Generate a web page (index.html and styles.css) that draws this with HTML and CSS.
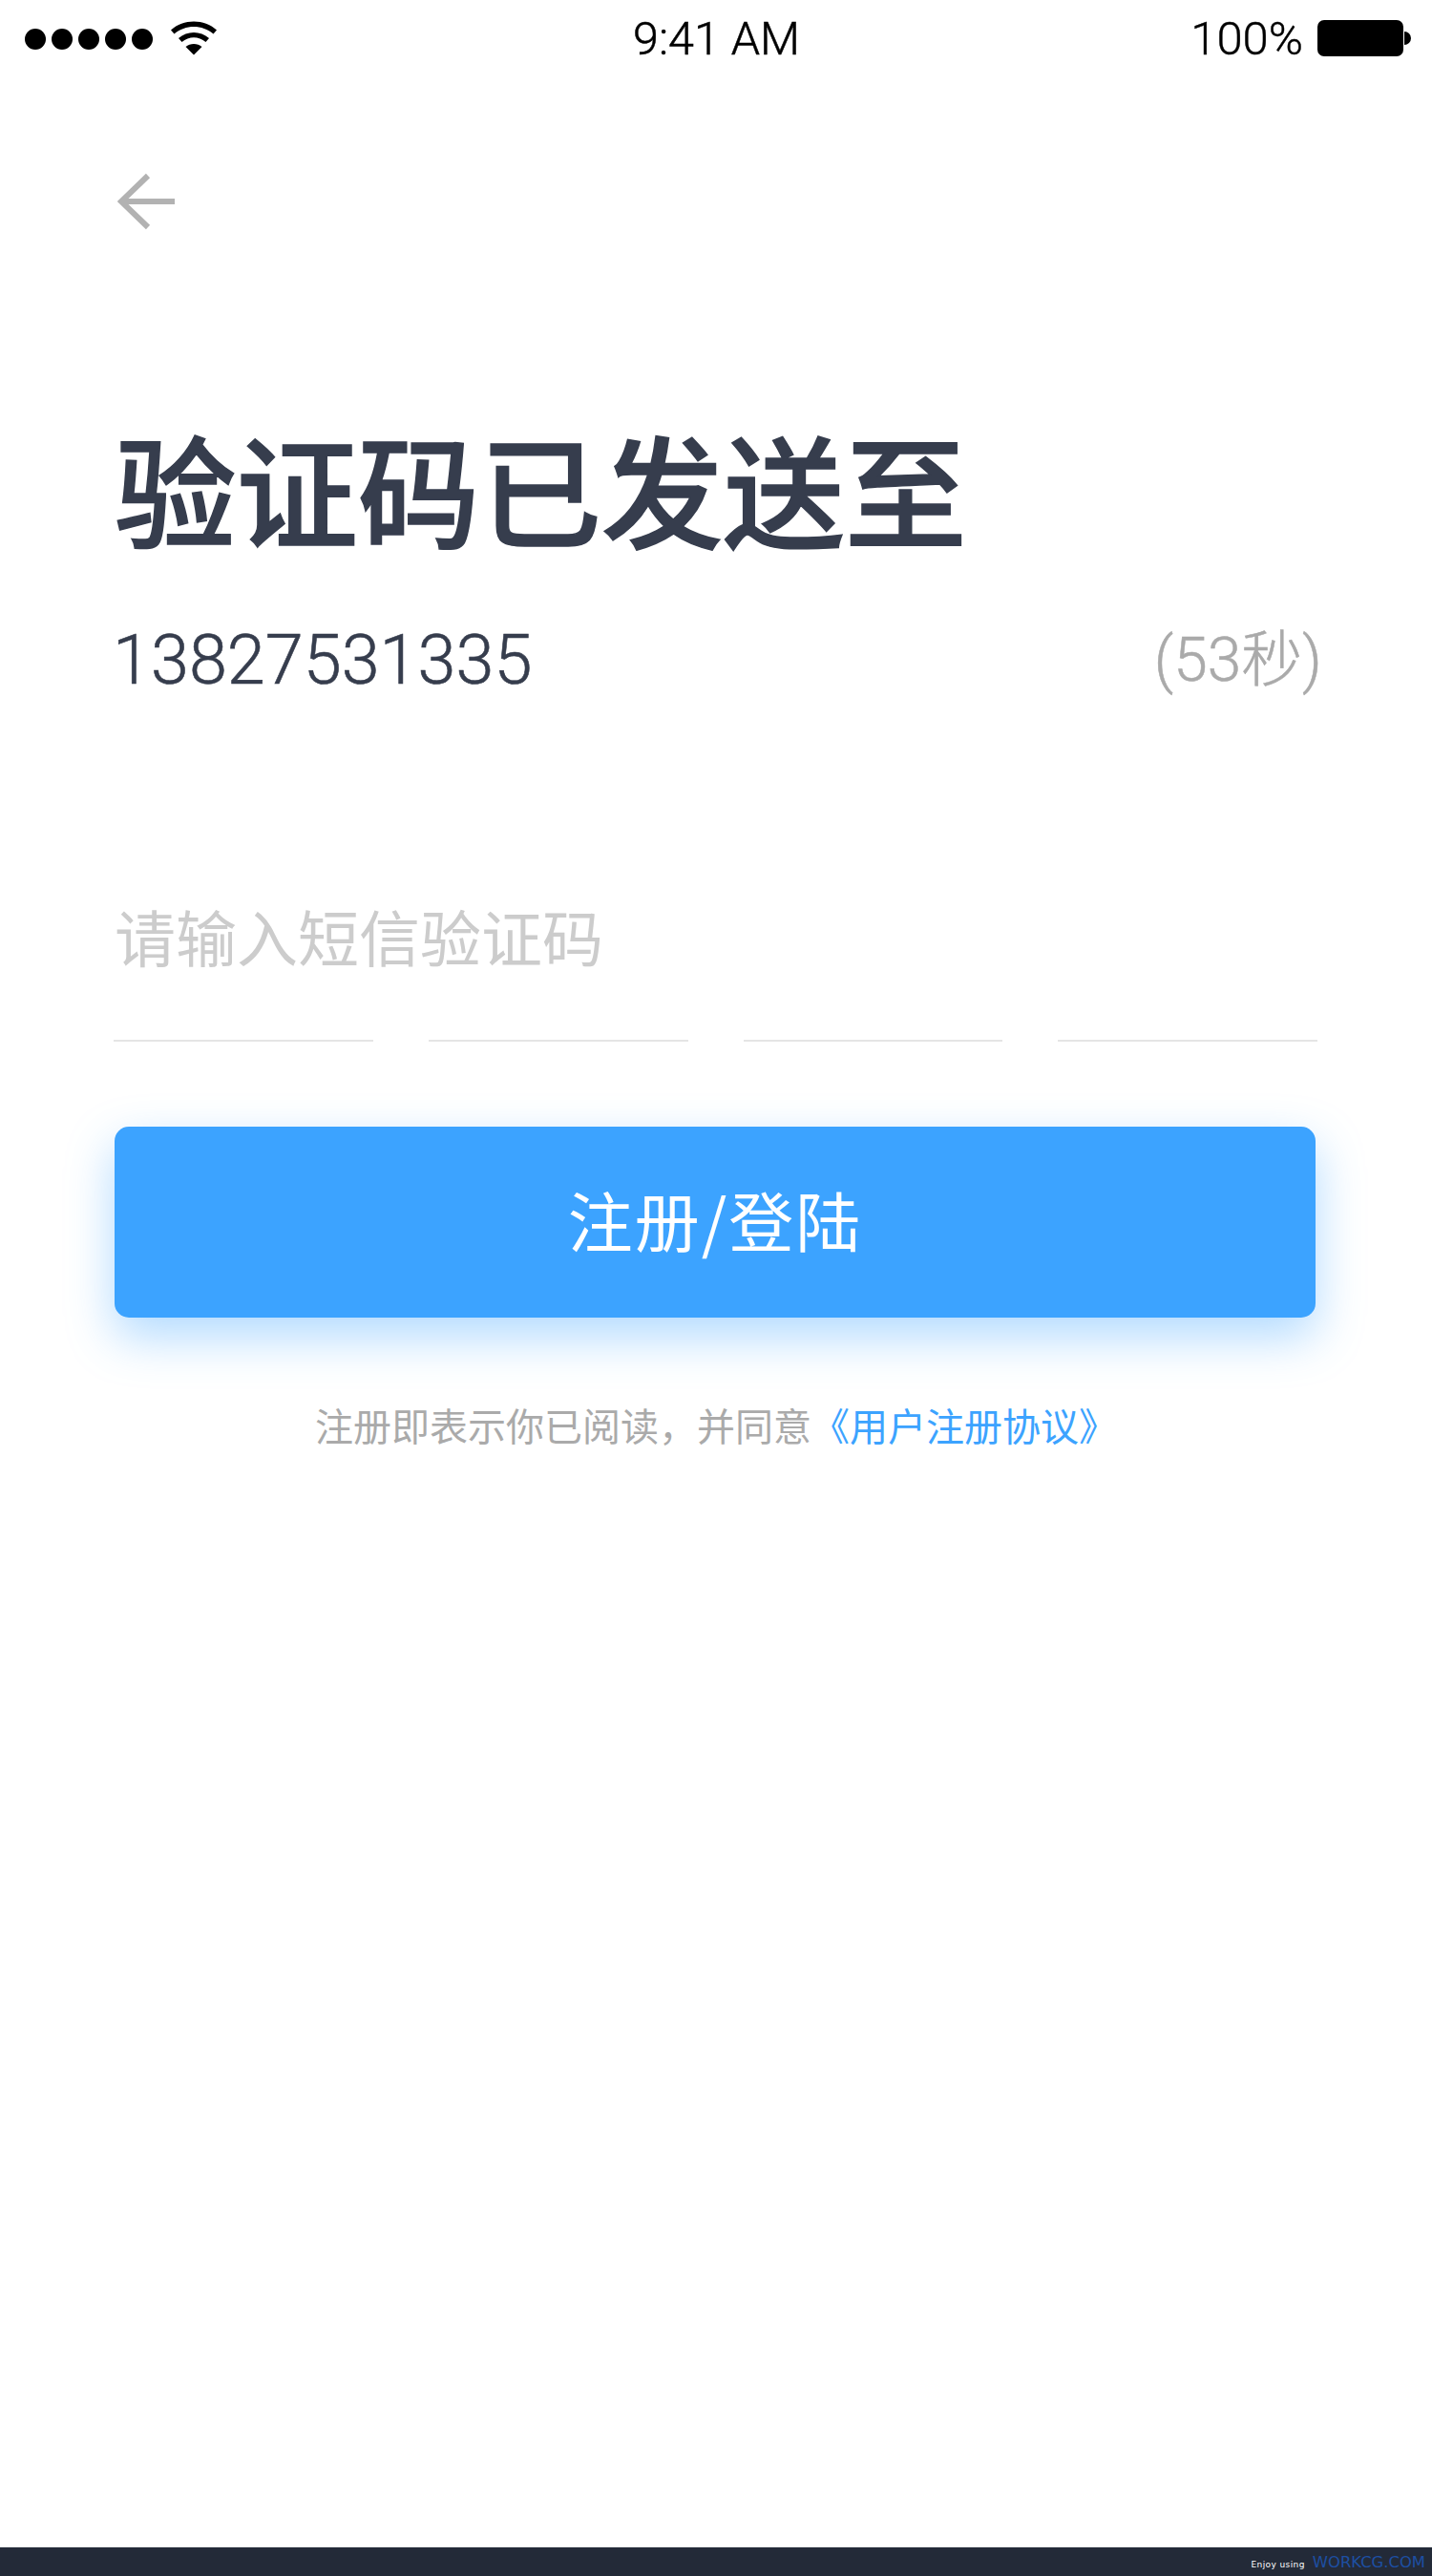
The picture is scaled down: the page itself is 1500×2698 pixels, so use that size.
FILE: index.html
```html
<!DOCTYPE html>
<html>
<head>
	<title>验证码</title>
	<link rel="stylesheet" href="styles.css">
</head>
<body>
	<div class="status">
		<div class="signal">
			<i class="dot"></i><i class="dot"></i><i class="dot"></i><i class="dot"></i><i class="dot"></i>
			<svg class="wifi" width="48" height="36" viewBox="0 0 48 36">
				<path d="M0 9.500C13 -2.500 35 -2.500 48 9.500L44.500 13.500C33 3.500 15 3.500 3.500 13.500Z"/>
				<path d="M8 18C17 10 31 10 40 18L36.500 22C29 15.500 19 15.500 11.500 22Z"/>
				<path d="M15.500 27C20 23 28 23 32.500 27L24 35.500Z"/>
			</svg>
		</div>
		<div class="time">9:41 AM</div>
		<div class="power">
			<span class="percent">100%</span>
			<div class="battery"></div>
			<div class="battery-tip"></div>
		</div>
	</div>

	<div class="back">
		<svg width="62" height="60" viewBox="0 0 62 60">
			<path d="M32 3L4 30L32 57M4 30H60" fill="none" stroke="#b2b2b2" stroke-width="6"/>
		</svg>
	</div>

	<div class="content">
		<h1 class="title">验证码已发送至</h1>
		<div class="phone-row">
			<span class="phone">13827531335</span>
			<span class="timer">(53秒)</span>
		</div>
		<div class="placeholder">请输入短信验证码</div>
		<div class="code-lines">
			<div></div><div></div><div></div><div></div>
		</div>
		<div class="submit">注册/登陆</div>
		<p class="agree">注册即表示你已阅读，并同意<a href="#">《用户注册协议》</a></p>
	</div>

	<div class="footer">
		<span class="enjoy">Enjoy using</span>
		<span class="brand">WORKCG.COM</span>
	</div>
</body>
</html>
```

FILE: styles.css
```css
*{padding:0; margin:0; box-sizing:border-box;}
html,body{height:100%;}
body{width:1500px; height:2698px; background:#fff; display:flex; flex-direction:column; overflow:hidden; font-family:Roboto,"Noto Sans CJK SC",sans-serif;}

.status{height:78px; padding:0 22px 0 26px; display:grid; grid-template-columns:1fr auto 1fr; align-items:center; color:#000;}
.signal{display:flex; align-items:center; gap:6px;}
.dot{width:22px; height:22px; border-radius:50%; background:#000;}
.wifi{margin:0 0 3px 13px;}
.time{font-size:48.500px; font-weight:300; line-height:82px; margin-right:3px; -webkit-text-stroke:.5px #000;}
.power{display:flex; align-items:center; justify-content:flex-end;}
.percent{font-size:49px; font-weight:300; line-height:56px; margin-right:15px; -webkit-text-stroke:.4px #000;}
.battery{width:90px; height:38px; margin-bottom:2px; background:#000; border-radius:7px;}
.battery-tip{width:7px; height:14px; margin:0 0 2px 1px; background:#000; border-radius:0 7px 7px 0;}

.back{padding:103px 0 0 123px; height:240px;}
.back svg{display:block;}

.content{padding:0 120px;}
.title{margin-top:134px; font-size:127.500px; line-height:140px; font-weight:500; color:#363d4d; white-space:nowrap; -webkit-text-stroke:1.5px #363d4d;}
.phone-row{margin-top:60px; height:80px; display:flex; justify-content:space-between; align-items:center;}
.phone{font-size:72px; font-weight:300; line-height:80px; color:#363d4d; margin-left:-2px; -webkit-text-stroke:.6px #363d4d;}
.timer{font-size:64px; font-weight:300; line-height:80px; color:#aaa; margin-right:-5px; -webkit-text-stroke:.5px #aaa;}
.placeholder{margin-top:210px; font-size:64px; line-height:88px; color:#ccc;}
.code-lines{margin-top:59px; margin-left:-1px; width:1261px; display:grid; grid-template-columns:repeat(4,1fr); gap:58px;}
.code-lines div{height:2px; background:#e5e5e5;}
.submit{margin-top:89px; width:1258px; height:200px; background:#3ca3ff; border-radius:15px; color:#fff; font-family:"Noto Sans CJK SC",sans-serif; font-size:68px; letter-spacing:2px; line-height:194px; text-align:center; box-shadow:0 20px 50px rgba(60,163,255,.4);}
.agree{margin-top:89px; font-size:40px; line-height:54px; text-align:center; color:#aaa;}
.agree a{color:#3ca3ff; text-decoration:none;}

.footer{margin-top:auto; height:30px; background:#232a38; display:flex; justify-content:flex-end; align-items:center; gap:8px; padding-right:7px; font-family:"DejaVu Sans",sans-serif;}
.enjoy{font-size:9px; letter-spacing:.4px; color:#fff; padding-top:5px;}
.brand{font-size:16.400px; color:#1d4fa3;}
```
